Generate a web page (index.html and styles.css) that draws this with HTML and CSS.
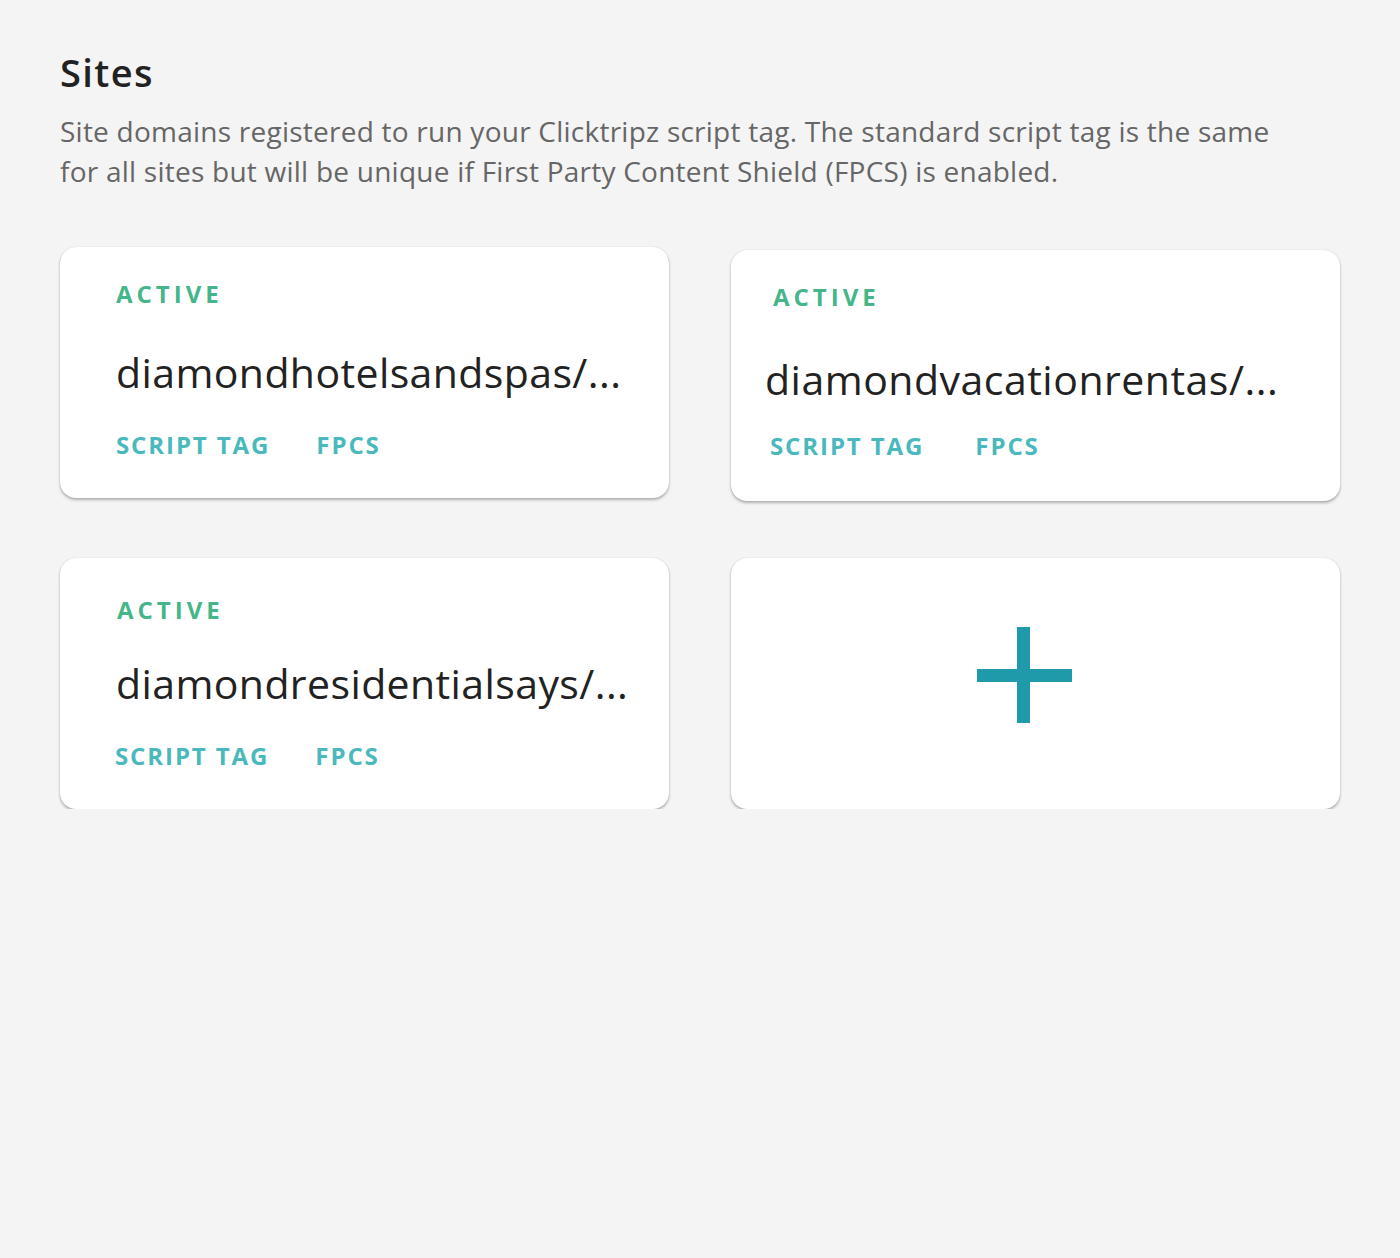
FILE: index.html
```html
<!DOCTYPE html>
<html lang="en">
<head>
<meta charset="utf-8">
<title>Sites</title>
<link rel="stylesheet" href="styles.css">
</head>
<body>
<main class="page">
  <h1 class="title">Sites</h1>
  <p class="desc">Site domains registered to run your Clicktripz script tag. The standard script tag is the same for all sites but will be unique if First Party Content Shield (FPCS) is enabled.</p>
  <section class="grid">
    <article class="card card-a">
      <div class="status">ACTIVE</div>
      <div class="domain">diamondhotelsandspas/...</div>
      <div class="links"><a class="link">SCRIPT TAG</a><a class="link">FPCS</a></div>
    </article>
    <article class="card card-b">
      <div class="status">ACTIVE</div>
      <div class="domain">diamondvacationrentas/...</div>
      <div class="links"><a class="link">SCRIPT TAG</a><a class="link">FPCS</a></div>
    </article>
    <article class="card card-c">
      <div class="status">ACTIVE</div>
      <div class="domain">diamondresidentialsays/...</div>
      <div class="links"><a class="link">SCRIPT TAG</a><a class="link">FPCS</a></div>
    </article>
    <article class="card card-add">
      <svg class="plus" width="95" height="96" viewBox="0 0 95 96" aria-label="Add site">
        <rect x="40" y="0" width="13" height="96" fill="#1f9aab"/>
        <rect x="0" y="42" width="95" height="13" fill="#1f9aab"/>
      </svg>
    </article>
  </section>
</main>
</body>
</html>
```
FILE: styles.css
```css
html, body {
  margin: 0;
  padding: 0;
  background: #f4f4f4;
}
body {
  font-family: "Open Sans", "Noto Sans", sans-serif;
  color: #222;
}
.page {
  padding: 48px 60px 0 60px;
}
.title {
  margin: 0;
  font-size: 38px;
  font-weight: 600;
  line-height: 48px;
  letter-spacing: 1.4px;
  color: #222;
}
.desc {
  margin: 15px 0 0 0;
  font-size: 28px;
  line-height: 40px;
  color: #666;
  max-width: 1230px;
  letter-spacing: 0.24px;
}
.grid {
  margin-top: 56px;
  display: grid;
  grid-template-columns: 609px 609px;
  column-gap: 62px;
  row-gap: 57px;
  align-items: start;
}
.card {
  background: #fff;
  border-radius: 16px;
  box-shadow: 0 2px 3px rgba(0,0,0,0.28), 0 0 1px rgba(0,0,0,0.2);
  height: 251px;
  box-sizing: border-box;
  padding: 32px 30px 0 56px;
}
.status {
  font-size: 24px;
  font-weight: 700;
  letter-spacing: 4px;
  color: #45b68a;
  line-height: 30px;
}
.domain {
  margin-top: 38px;
  font-size: 41px;
  line-height: 50px;
  letter-spacing: 0.4px;
  color: #222;
  white-space: nowrap;
}
.links {
  margin-top: 33px;
  display: flex;
  gap: 46px;
}
.link {
  font-size: 24px;
  font-weight: 700;
  letter-spacing: 1.9px;
  color: #4ab9bd;
  line-height: 30px;
}
.card-b {
  margin-top: 3px;
  padding-left: 42px;
}
.card-b .domain {
  margin-top: 42px;
  margin-left: -8px;
  letter-spacing: 0.5px;
}
.card-b .links {
  margin-top: 27px;
  margin-left: -3px;
  gap: 51px;
}
.card-c .status {
  margin-top: 5px;
  margin-left: 1px;
}
.card-c .domain {
  margin-top: 33px;
}
.card-c .links {
  margin-left: -1px;
}
.card-add {
  padding: 69px 0 0 246px;
}
.plus {
  display: block;
}
```
